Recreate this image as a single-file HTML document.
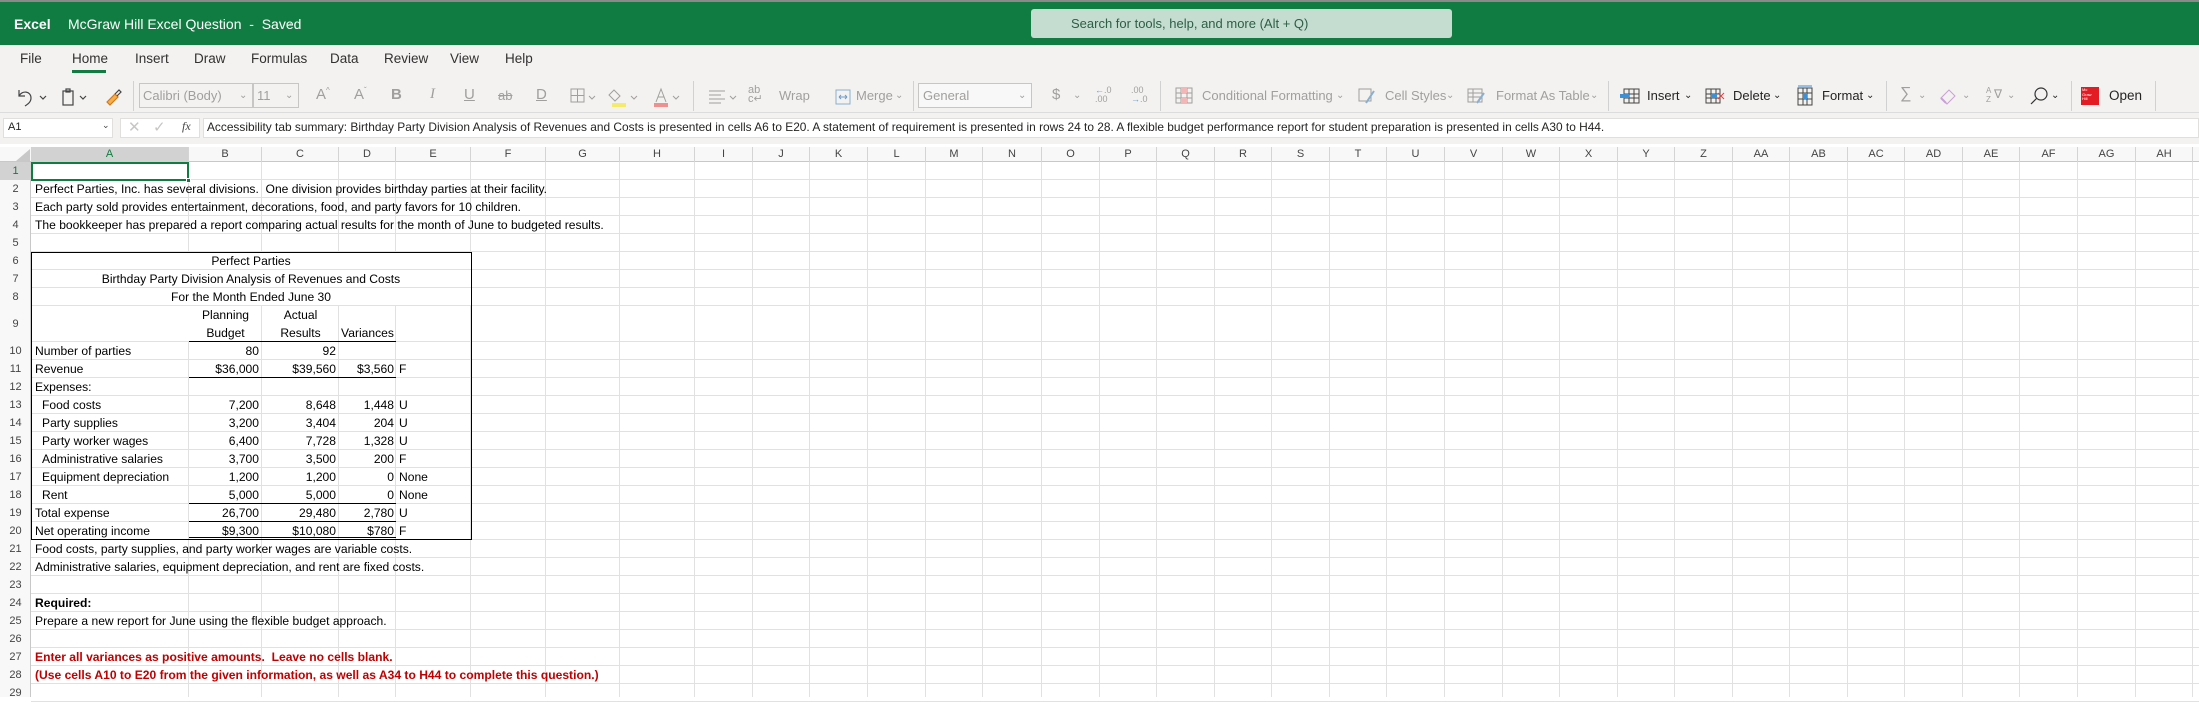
<!DOCTYPE html>
<html><head><meta charset="utf-8">
<style>
*{margin:0;padding:0;box-sizing:border-box}
body{width:2199px;height:697px;overflow:hidden;background:#fff;font-family:"Liberation Sans",sans-serif;position:relative;color:#252423}
.a{position:absolute;white-space:nowrap}
#topbar{position:absolute;left:0;top:0;width:2199px;height:45px;background:#107c41;border-top:2px solid #8a8a8a}
#rib{position:absolute;left:0;top:45px;width:2199px;height:68px;background:#f3f2f1;border-bottom:1px solid #dcdcdc}
.tab{font-size:13.5px;color:#323130;top:51px}
.ri{font-size:13px;color:#a19f9d;top:88px}
.rd{font-size:13px;color:#252423;top:88px}
.sep{position:absolute;top:81px;width:1px;height:30px;background:#d1d1d1}
.box{position:absolute;border:1px solid #c8c6c4;background:#f3f2f1}
.cell{position:absolute;font-size:12.1px;line-height:18px;white-space:nowrap;color:#000}
.r{text-align:right}
.ch{position:absolute;top:147px;height:15px;font-size:11px;line-height:15px;text-align:center;color:#444;border-right:1px solid #d4d4d4}
.rh{position:absolute;left:0;width:31px;font-size:11px;text-align:center;color:#444}
.vl{position:absolute;width:1px;background:#e1e1e1;top:162px;height:535px}
.hl{position:absolute;height:1px;background:#e1e1e1;left:31px;width:2168px}
.bk{position:absolute;background:#000}
.red{color:#c00000}
</style></head><body>
<div id="topbar"></div>
<div class="a" style="left:14px;top:16px;font-size:14px;font-weight:bold;color:#fff">Excel</div>
<div class="a" style="left:68px;top:16px;font-size:14px;color:#fff">McGraw Hill Excel Question&nbsp; - &nbsp;Saved</div>
<div class="a" style="left:284px;top:16px;font-size:11px;color:#cfe6d8">&#8964;</div>
<div class="a" style="left:1031px;top:9px;width:421px;height:29px;background:#c5ddd0;border-radius:3px"></div>
<div class="a" style="left:1071px;top:16px;font-size:13px;color:#2d5e44">Search for tools, help, and more (Alt + Q)</div>

<div id="rib"></div>
<div class="a tab" style="left:20px">File</div>
<div class="a tab" style="left:72px">Home</div>
<div class="a" style="left:72px;top:70px;width:34px;height:3px;background:#107c41"></div>
<div class="a tab" style="left:135px">Insert</div>
<div class="a tab" style="left:194px">Draw</div>
<div class="a tab" style="left:251px">Formulas</div>
<div class="a tab" style="left:330px">Data</div>
<div class="a tab" style="left:384px">Review</div>
<div class="a tab" style="left:450px">View</div>
<div class="a tab" style="left:505px">Help</div>

<svg class="a" style="left:14px;top:86px" width="120" height="22" viewBox="0 0 120 22" fill="none" stroke="#444" stroke-width="1.2">
<path d="M5 4v6h6M5 10c3-6 12-5 12 2 0 4-3 6-6 8"/><path d="M26 10l3 3 3-3"/>
<rect x="49" y="5" width="10" height="14"/><rect x="52" y="3" width="4" height="3"/><path d="M66 10l3 3 3-3"/>
<path d="M93 16l8-8 3 3-8 8z" stroke="#d07a20" fill="#f5b04a"/><path d="M101 8l4-4 2 2-4 4" stroke="#444"/>
</svg>
<div class="sep" style="left:133px"></div>
<div class="box" style="left:139px;top:83px;width:114px;height:25px"></div>
<div class="a ri" style="left:143px">Calibri (Body)</div>
<div class="a ri" style="left:239px;font-size:10px;top:90px">&#8964;</div>
<div class="box" style="left:253px;top:83px;width:46px;height:25px"></div>
<div class="a ri" style="left:257px">11</div>
<div class="a ri" style="left:285px;font-size:10px;top:90px">&#8964;</div>
<div class="a ri" style="left:316px;font-size:15px;top:86px">A<sup style="font-size:8px">^</sup></div>
<div class="a ri" style="left:354px;font-size:15px;top:86px">A<sup style="font-size:8px">ˇ</sup></div>
<div class="a ri" style="left:391px;font-size:15px;top:86px;font-weight:bold">B</div>
<div class="a ri" style="left:430px;font-size:15px;top:86px;font-style:italic;font-family:'Liberation Serif',serif">I</div>
<div class="a ri" style="left:464px;font-size:15px;top:86px;text-decoration:underline">U</div>
<div class="a ri" style="left:498px;font-size:13px;top:88px;text-decoration:line-through">ab</div>
<div class="a ri" style="left:536px;font-size:15px;top:86px;text-decoration:underline">D</div>
<svg class="a" style="left:570px;top:86px" width="120" height="22" viewBox="0 0 120 22" fill="none" stroke="#a19f9d" stroke-width="1">
<rect x="1" y="3" width="13" height="13"/><path d="M7.5 3v13M1 9.5h13"/><path d="M19 10l3 3 3-3"/>
<path d="M44 4l6 6-5 5-6-6z"/><rect x="42" y="17" width="14" height="4" fill="#f5ea6a" stroke="none"/><path d="M61 10l3 3 3-3"/>
<path d="M86 16l5-13 5 13M88 11h6"/><rect x="84" y="17" width="14" height="4" fill="#f08f8f" stroke="none"/><path d="M103 10l3 3 3-3"/>
</svg>
<div class="sep" style="left:693px"></div>
<svg class="a" style="left:708px;top:86px" width="200" height="22" viewBox="0 0 200 22" fill="none" stroke="#a19f9d" stroke-width="1">
<path d="M1 5h16M1 9h12M1 13h16M1 17h12"/><path d="M22 10l3 3 3-3"/>
<path d="M128 4h14v14h-14z" stroke="#8ab0d0"/><path d="M131 11h8M131 11l2-2M131 11l2 2M139 11l-2-2M139 11l-2 2" stroke="#6a9ccf"/>
</svg>
<div class="a ri" style="left:748px;font-size:11px;top:86px;line-height:9px">ab<br>c&#8629;</div>
<div class="a ri" style="left:779px">Wrap</div>
<div class="a ri" style="left:856px">Merge</div>
<div class="a ri" style="left:895px;font-size:10px;top:90px">&#8964;</div>
<div class="sep" style="left:913px"></div>
<div class="box" style="left:918px;top:83px;width:114px;height:25px;background:#f8f8f8"></div>
<div class="a ri" style="left:923px">General</div>
<div class="a ri" style="left:1018px;font-size:10px;top:90px">&#8964;</div>
<div class="a ri" style="left:1052px;font-size:15px;top:86px">$</div>
<div class="a ri" style="left:1073px;font-size:10px;top:90px">&#8964;</div>
<div class="a ri" style="left:1095px;font-size:9px;top:86px;line-height:9px"><span style="color:#6a9ccf">&#8592;</span>.0<br>.00</div>
<div class="a ri" style="left:1131px;font-size:9px;top:86px;line-height:9px">.00<br><span style="color:#6a9ccf">&#8594;</span>.0</div>
<div class="sep" style="left:1160px"></div>
<svg class="a" style="left:1175px;top:87px" width="20" height="18" viewBox="0 0 20 18" fill="none" stroke="#a19f9d"><rect x="1" y="1" width="16" height="15"/><path d="M1 6h16M1 11h16M6 1v15M12 1v15"/><rect x="6" y="1" width="6" height="5" fill="#f3b7b7" stroke="none"/><rect x="6" y="11" width="6" height="5" fill="#f3b7b7" stroke="none"/></svg>
<div class="a ri" style="left:1202px">Conditional Formatting</div>
<div class="a ri" style="left:1336px;font-size:10px;top:90px">&#8964;</div>
<svg class="a" style="left:1358px;top:87px" width="20" height="18" viewBox="0 0 20 18" fill="none" stroke="#a19f9d"><rect x="1" y="2" width="12" height="12"/><path d="M8 16l8-12" stroke="#8ab0d0" stroke-width="2"/></svg>
<div class="a ri" style="left:1385px">Cell Styles</div>
<div class="a ri" style="left:1446px;font-size:10px;top:90px">&#8964;</div>
<svg class="a" style="left:1467px;top:87px" width="20" height="18" viewBox="0 0 20 18" fill="none" stroke="#a19f9d"><rect x="1" y="2" width="14" height="13"/><path d="M1 6h14M1 10h14M6 2v13"/><path d="M10 16l7-10" stroke="#8ab0d0" stroke-width="2"/></svg>
<div class="a ri" style="left:1496px">Format As Table</div>
<div class="a ri" style="left:1590px;font-size:10px;top:90px">&#8964;</div>
<div class="sep" style="left:1608px"></div>
<svg class="a" style="left:1619px;top:86px" width="22" height="20" viewBox="0 0 22 20" fill="none" stroke="#444"><rect x="5" y="3" width="15" height="14"/><path d="M5 8h15M5 12h15M10 3v14M15 3v14"/><rect x="1" y="8" width="9" height="4" fill="#3d8fd6" stroke="none"/></svg>
<div class="a rd" style="left:1647px">Insert</div>
<div class="a rd" style="left:1684px;font-size:10px;top:90px">&#8964;</div>
<svg class="a" style="left:1704px;top:86px" width="22" height="20" viewBox="0 0 22 20" fill="none" stroke="#444"><rect x="2" y="3" width="14" height="14"/><path d="M2 8h14M2 12h14M7 3v14M12 3v14"/><rect x="7" y="8" width="6" height="4" fill="#3d8fd6" stroke="none"/><path d="M14 7l6 6M20 7l-6 6" stroke="#e04040"/></svg>
<div class="a rd" style="left:1733px">Delete</div>
<div class="a rd" style="left:1773px;font-size:10px;top:90px">&#8964;</div>
<svg class="a" style="left:1795px;top:85px" width="20" height="22" viewBox="0 0 20 22" fill="none" stroke="#444"><rect x="3" y="3" width="14" height="17"/><path d="M3 8h14M3 14h14M8 3v17M12 3v17"/><rect x="8" y="8" width="4" height="6" fill="#3d8fd6" stroke="none"/><path d="M3 1h14" stroke="#3d8fd6"/></svg>
<div class="a rd" style="left:1822px">Format</div>
<div class="a rd" style="left:1866px;font-size:10px;top:90px">&#8964;</div>
<div class="sep" style="left:1886px"></div>
<div class="a ri" style="left:1900px;font-size:16px;top:85px">&#8721;</div>
<div class="a ri" style="left:1918px;font-size:10px;top:90px">&#8964;</div>
<svg class="a" style="left:1938px;top:86px" width="20" height="20" viewBox="0 0 20 20" fill="none" stroke="#c9a0d6"><path d="M3 12l8-8 6 6-8 8z"/><path d="M3 12l5 5" stroke-width="2"/></svg>
<div class="a ri" style="left:1962px;font-size:10px;top:90px">&#8964;</div>
<div class="a ri" style="left:1986px;font-size:8px;top:86px;line-height:9px">A<br>Z</div><div class="a ri" style="left:1994px;top:87px;font-size:12px">&#8711;</div>
<div class="a ri" style="left:2007px;font-size:10px;top:90px">&#8964;</div>
<svg class="a" style="left:2029px;top:86px" width="20" height="20" viewBox="0 0 20 20" fill="none" stroke="#333" stroke-width="1.2"><circle cx="12" cy="8" r="6"/><path d="M8 12l-6 6"/></svg>
<div class="a rd" style="left:2051px;font-size:10px;top:90px">&#8964;</div>
<div class="sep" style="left:2071px"></div>
<div class="a" style="left:2081px;top:87px;width:18px;height:18px;background:#e31b23;color:#fff;font-size:4px;line-height:4.5px;padding:1px">Mc<br>Graw<br>Hill</div>
<div class="a rd" style="left:2109px;font-size:13.5px">Open</div>
<div class="sep" style="left:2155px"></div>

<div class="a" style="left:0;top:113px;width:2199px;height:31px;background:#f3f2f1"></div>
<div class="a" style="left:3px;top:118px;width:110px;height:20px;background:#fff;border:1px solid #e1dfdd"></div>
<div class="a" style="left:8px;top:121px;font-size:11px;color:#252423">A1</div>
<div class="a" style="left:102px;top:120px;font-size:9px;color:#444">&#8964;</div>
<div class="a" style="left:120px;top:118px;width:80px;height:20px;background:#fff;border:1px solid #e1dfdd"></div>
<div class="a" style="left:128px;top:118px;font-size:15px;color:#c8c6c4">&#10005;</div>
<div class="a" style="left:153px;top:118px;font-size:15px;color:#c8c6c4">&#10003;</div>
<div class="a" style="left:182px;top:119px;font-size:12px;font-style:italic;font-family:'Liberation Serif',serif;color:#444">fx</div>
<div class="a" style="left:203px;top:118px;width:1996px;height:20px;background:#fff;border:1px solid #e1dfdd"></div>
<div class="a" style="left:207px;top:120px;font-size:11.9px;color:#252423">Accessibility tab summary: Birthday Party Division Analysis of Revenues and Costs is presented in cells A6 to E20. A statement of requirement is presented in rows 24 to 28. A flexible budget performance report for student preparation is presented in cells A30 to H44.</div>

<div class="a" style="left:0;top:147px;width:2199px;height:15px;background:#f8f8f8;border-bottom:1px solid #c8c8c8"></div>
<div class="a" style="left:0;top:162px;width:31px;height:535px;background:#f8f8f8;border-right:1px solid #c8c8c8"></div>
<svg class="a" style="left:16px;top:149px" width="14" height="12"><path d="M14 0v12H0z" fill="#c8c8c8"/></svg>
<div id="g"></div>
<div id="t"></div>

<script>
function rowTop(n){return 162+(n-1)*18+(n>=10?18:0);}
var b=[31,189,262,339,396,471,546,620,695,753,810,868,926,983,1042,1100,1157,1215,1272,1330,1387,1445,1503,1560,1618,1675,1733,1790,1848,1905,1963,2020,2078,2136,2193,2199];
var L="A B C D E F G H I J K L M N O P Q R S T U V W X Y Z AA AB AC AD AE AF AG AH".split(" ");
var h="";
for(var i=0;i<L.length;i++){var w=b[i+1]-b[i];h+='<div class="ch" style="left:'+b[i]+'px;width:'+w+'px;'+(i==0?'background:#d2d2d2;color:#107c41;':'')+'">'+L[i]+'</div>';
h+='<div class="vl" style="left:'+(b[i+1]-1)+'px"></div>';}
h+='<div class="a" style="left:32px;top:253px;width:439px;height:53px;background:#fff"></div>';
h+='<div class="a" style="left:32px;top:306px;width:157px;height:36px;background:#fff"></div>';
for(var n=1;n<=29;n++){var t=rowTop(n),hh=(n==9?36:18);
h+='<div class="hl" style="top:'+(t+hh-1)+'px"></div>';
h+='<div class="rh" style="top:'+t+'px;height:'+hh+'px;line-height:'+hh+'px;'+(n==1?'background:#d2d2d2;color:#107c41;':'')+'">'+n+'</div>';}
document.getElementById("g").innerHTML=h;
var R=[[10,"Number of parties","80","92","",""],[11,"Revenue","$36,000","$39,560","$3,560","F"],[12,"Expenses:","","","",""],
[13," Food costs","7,200","8,648","1,448","U"],[14," Party supplies","3,200","3,404","204","U"],[15," Party worker wages","6,400","7,728","1,328","U"],
[16," Administrative salaries","3,700","3,500","200","F"],[17," Equipment depreciation","1,200","1,200","0","None"],[18," Rent","5,000","5,000","0","None"],
[19,"Total expense","26,700","29,480","2,780","U"],[20,"Net operating income","$9,300","$10,080","$780","F"],
[21,"Food costs, party supplies, and party worker wages are variable costs."],
[22,"Administrative salaries, equipment depreciation, and rent are fixed costs."],
[24,"<b>Required:</b>"],[25,"Prepare a new report for June using the flexible budget approach."],
[27,"<b class='red'>Enter all variances as positive amounts.&nbsp; Leave no cells blank.</b>"],
[28,"<b class='red'>(Use cells A10 to E20 from the given information, as well as A34 to H44 to complete this question.)</b>"]];
var s="";
for(var k=0;k<R.length;k++){var r=R[k],t=rowTop(r[0]),ind=r[1].charAt(0)==" ";
s+='<div class="cell" style="left:'+(ind?42:35)+'px;top:'+t+'px">'+r[1].trim()+'</div>';
if(r.length>2){
s+='<div class="cell r" style="left:189px;width:70px;top:'+t+'px">'+r[2]+'</div>';
s+='<div class="cell r" style="left:262px;width:74px;top:'+t+'px">'+r[3]+'</div>';
s+='<div class="cell r" style="left:339px;width:55px;top:'+t+'px">'+r[4]+'</div>';
s+='<div class="cell" style="left:399px;top:'+t+'px">'+r[5]+'</div>';}}
document.getElementById("t").innerHTML=s;
</script>

<div class="a" style="left:31px;top:162px;width:158px;height:19px;border:2px solid #107c41"></div>
<div class="a" style="left:186px;top:178px;width:5px;height:5px;background:#107c41;border:1px solid #fff"></div>

<div class="cell" style="left:35px;top:180px">Perfect Parties, Inc. has several divisions.&nbsp; One division provides birthday parties at their facility.</div>
<div class="cell" style="left:35px;top:198px">Each party sold provides entertainment, decorations, food, and party favors for 10 children.</div>
<div class="cell" style="left:35px;top:216px">The bookkeeper has prepared a report comparing actual results for the month of June to budgeted results.</div>
<div class="cell" style="left:31px;top:252px;width:440px;text-align:center">Perfect Parties</div>
<div class="cell" style="left:31px;top:270px;width:440px;text-align:center">Birthday Party Division Analysis of Revenues and Costs</div>
<div class="cell" style="left:31px;top:288px;width:440px;text-align:center">For the Month Ended June 30</div>
<div class="cell" style="left:189px;top:306px;width:73px;text-align:center;line-height:18px">Planning<br>Budget</div>
<div class="cell" style="left:262px;top:306px;width:77px;text-align:center;line-height:18px">Actual<br>Results</div>
<div class="cell" style="left:339px;top:324px;width:57px;text-align:center">Variances</div>

<div class="bk" style="left:31px;top:252px;width:441px;height:1px"></div>
<div class="bk" style="left:31px;top:252px;width:1px;height:288px"></div>
<div class="bk" style="left:471px;top:252px;width:1px;height:288px"></div>
<div class="bk" style="left:31px;top:539px;width:441px;height:1px"></div>
<div class="bk" style="left:189px;top:341px;width:207px;height:1px"></div>
<div class="bk" style="left:189px;top:377px;width:207px;height:1px"></div>
<div class="bk" style="left:189px;top:503px;width:207px;height:1px"></div>
<div class="bk" style="left:189px;top:521px;width:207px;height:1px"></div>
<div class="bk" style="left:189px;top:537px;width:207px;height:1px"></div>
</body></html>
